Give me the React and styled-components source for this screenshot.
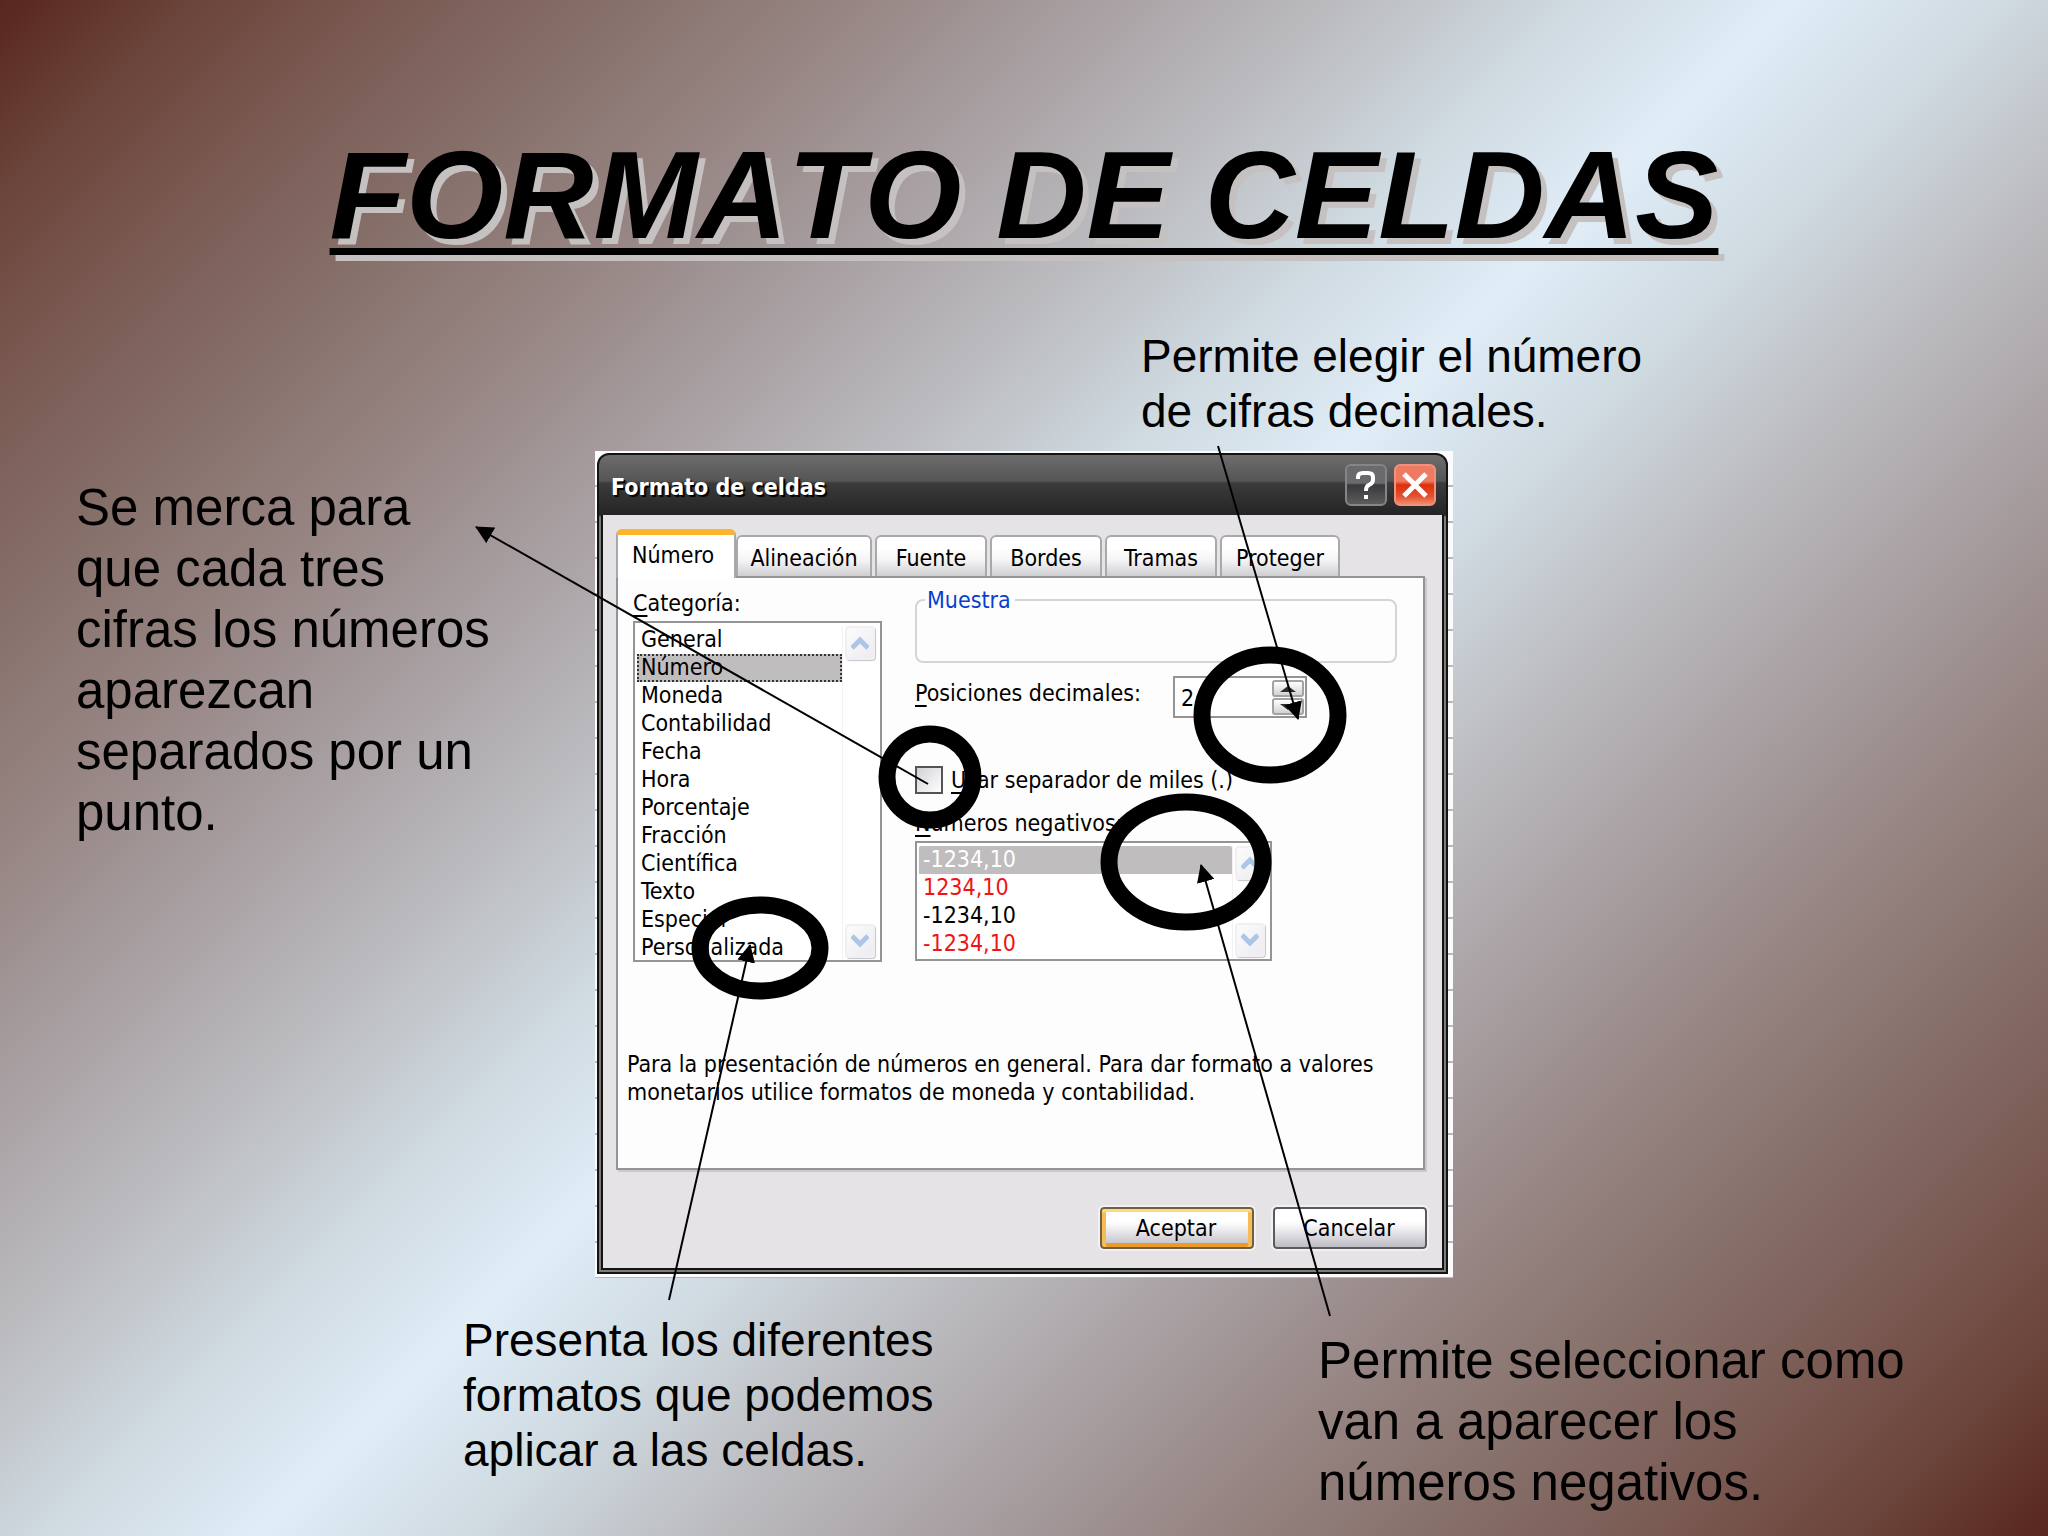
import React, { useState } from 'react';
import styled, { createGlobalStyle, css } from 'styled-components';

const constants = {
  slideFont: '"Liberation Sans", Arial, sans-serif',
  dialogFont: '"DejaVu Sans Condensed", Tahoma, Roboto, sans-serif',
  frame: '#141414',
  frameLight: '#7c7d7a',
  face: '#e5e3e6',
  line: '#949496',
  selection: '#c0bdbf',
  legend: '#0a40cc',
  negative: '#f01414',
};

const categories = [
  'General',
  'Número',
  'Moneda',
  'Contabilidad',
  'Fecha',
  'Hora',
  'Porcentaje',
  'Fracción',
  'Científica',
  'Texto',
  'Especial',
  'Personalizada',
];

const negatives = [
  { id: 'minus', text: '-1234,10' },
  { id: 'red', text: '1234,10', red: true },
  { id: 'minus-black', text: '-1234,10' },
  { id: 'minus-red', text: '-1234,10', red: true },
];

const tabs = [
  { name: 'Número', width: 120 },
  { name: 'Alineación', width: 136 },
  { name: 'Fuente', width: 112 },
  { name: 'Bordes', width: 112 },
  { name: 'Tramas', width: 112 },
  { name: 'Proteger', width: 120 },
];

const GlobalStyle = createGlobalStyle`
  * {
    box-sizing: border-box;
  }

  body {
    margin: 0;
    color: #000;
    font-family: ${constants.slideFont};
  }

  button, input, select {
    font: inherit;
    color: inherit;
    margin: 0;
  }
`;

const Slide = styled.main`
  min-height: 100vh;
  padding: 120px 0 20px;
  overflow: hidden;
  background: linear-gradient(
    135deg,
    #58261c 0%,
    #6a4238 5%,
    #7a5a53 11%,
    #866f69 17%,
    #978684 24%,
    #a9a1a4 31%,
    #bdbec2 38%,
    #cfdae1 44%,
    #e0edf7 50%,
    #cfdae1 56%,
    #bdbec2 62%,
    #a9a1a4 69%,
    #978684 76%,
    #866f69 83%,
    #7a5a53 89%,
    #6a4238 95%,
    #58261c 100%
  );
`;

const Title = styled.h1`
  margin: 0 0 59px;
  font-size: 125px;
  line-height: 150px;
  font-style: italic;
  text-align: center;
  text-decoration: underline 7px;
  text-underline-offset: 10px;
  text-decoration-skip-ink: none;
  text-shadow: 6px 6px 0 #c4c1c0;
  font-kerning: none;
`;

const Board = styled.div`
  display: grid;
  grid-template-columns: 1fr 858px 1fr;
`;

const Note = styled.p`
  margin: 0;
  font-size: ${({ $large }) => ($large ? 51 : 46)}px;
  line-height: ${({ $large }) => ($large ? 61 : 55)}px;
`;

const TopNote = styled(Note)`
  grid-column: 2;
  width: 530px;
  margin: 0 0 12px 546px;
`;

const SideNote = styled(Note)`
  grid-column: 1;
  width: 420px;
  margin: 26px 0 0 76px;
`;

const BottomNotes = styled.div`
  grid-column: 1 / -1;
  display: grid;
  grid-template-columns: 1fr 1fr;
  padding-top: 35px;
`;

const BottomLeftNote = styled(Note)`
  justify-self: end;
  width: 561px;
  padding-right: 60px;
`;

const BottomRightNote = styled(Note)`
  width: 610px;
  margin: 17px 0 0 294px;
`;

const Figure = styled.figure`
  position: relative;
  grid-column: 2;
  margin: 0;
  padding: 2px 5px 4px 2px;
  background: repeating-linear-gradient(#fbfbfb 0 34px, #b9b9bd 34px 36px);
`;

const Overlay = styled.svg`
  position: absolute;
  top: 0;
  left: 0;
  overflow: visible;
  pointer-events: none;
`;

const Window = styled.section`
  padding: 0 2px 2px;
  border: 2px solid ${constants.frame};
  border-radius: 12px 12px 0 0;
  background: linear-gradient(#6d6d6d 0, #555 26px, #3b3b3b 28px, #242424 60px, ${constants.frameLight} 62px);
  font-family: ${constants.dialogFont};
  font-size: 23px;
  line-height: 28px;
`;

const TitleBar = styled.header`
  display: flex;
  align-items: center;
  gap: 7px;
  height: 60px;
  padding: 0 8px 0 10px;
`;

const WindowTitle = styled.h2`
  flex: 1;
  margin: 0;
  padding-top: 3px;
  color: #fff;
  font-size: 23px;
  text-shadow: 2px 2px 1px #000;
`;

const CaptionButton = styled.button`
  display: flex;
  align-items: center;
  justify-content: center;
  width: 42px;
  height: 42px;
  padding: 0;
  border: 2px solid ${({ $close }) => ($close ? '#f0917c' : '#858587')};
  border-radius: 6px;
  background: ${({ $close }) => ($close
    ? 'linear-gradient(#ee7a62 0 40%, #dd2f0c 50%, #e2532f 80%, #f08a70)'
    : 'linear-gradient(#6a6a6c 0 45%, #39393b 50%, #5c5c5e)')};
`;

const Body = styled.div`
  padding: 14px 17px 19px 13px;
  border: 2px solid ${constants.frame};
  border-top: 0;
  background: ${constants.face};
`;

const TabList = styled.div`
  display: flex;
  align-items: flex-end;
  gap: 3px;
`;

const Tab = styled.button`
  width: ${({ $width }) => $width}px;
  height: 41px;
  padding: 2px 0 0;
  border: 2px solid #a9a9ac;
  border-bottom: 0;
  border-radius: 6px 6px 0 0;
  background: linear-gradient(#fff 30%, #f4f3f5 60%, #cfced1);

  ${({ $active }) => $active && css`
    position: relative;
    height: 49px;
    margin: 0 -3px -2px 0;
    padding: 0 6px 4px 0;
    border-top: 6px solid #fbb42c;
    background: #fff;
  `}
`;

const Panel = styled.div`
  height: 594px;
  border: 2px solid ${constants.line};
  box-shadow: 2px 2px 0 #cbc9cc;
  background: #fefdfe;
  padding: 8px 26px 0 15px;
`;

const Columns = styled.div`
  display: grid;
  grid-template-columns: 249px 1fr;
  column-gap: 33px;
`;

const Label = styled.label`
  display: block;

  &::first-letter {
    text-decoration: underline 2px;
    text-underline-offset: 4px;
  }
`;

const ListLabel = styled(Label)`
  padding: 3px 0 4px;
`;

const ListFrame = styled.div`
  display: flex;
  width: ${({ $width }) => $width}px;
  height: ${({ $height }) => $height}px;
  padding: 3px 3px 1px 2px;
  border: 2px solid ${constants.line};
  background: #fff;
`;

const List = styled.select`
  flex: 1;
  min-width: 0;
  height: 100%;
  padding: 0;
  border: 0;
  outline: 0;
  overflow: hidden;
  scrollbar-width: none;
  background: transparent;
`;

const Option = styled.option`
  height: 28px;
  min-height: 28px;
  padding: 0 4px;
  line-height: 28px;
  color: ${({ $red }) => ($red ? constants.negative : '#000')};

  &:checked {
    color: ${({ $inverse }) => ($inverse ? '#fff' : '#000')};
    background: linear-gradient(${constants.selection}, ${constants.selection});
    ${({ $inverse }) => !$inverse && css`
      outline: 2px dotted #333;
      outline-offset: -2px;
    `}
  }
`;

const ScrollBar = styled.div`
  display: flex;
  flex-direction: column;
  justify-content: space-between;
  width: 35px;
  padding: 0 0 1px 2px;
  border-left: 1px solid #f3f1f4;
`;

const ScrollButton = styled.button`
  display: flex;
  align-items: center;
  justify-content: center;
  width: 30px;
  height: 34px;
  padding: 0;
  border: 2px solid #f0f0f3;
  border-radius: 4px;
  box-shadow: 1px 1px 1px #c4c4cc;
  background: linear-gradient(135deg, #fcfcfd, #ececf1);
`;

const Sample = styled.fieldset`
  height: 77px;
  margin: 0 0 13px;
  padding: 0 8px;
  border: 2px solid #d5d4d8;
  border-radius: 8px;
  color: ${constants.legend};

  legend {
    padding: 0 4px 0 2px;
  }
`;

const DecimalsRow = styled.div`
  display: flex;
  align-items: flex-start;
  justify-content: space-between;
  width: 392px;
  height: 90px;

  label {
    margin-top: 3px;
  }
`;

const Spinner = styled.div`
  display: flex;
  width: 134px;
  height: 42px;
  padding: 2px 1px 1px 6px;
  border: 2px solid ${constants.line};
  background: #fff;

  input {
    flex: 1;
    min-width: 0;
    padding: 0;
    border: 0;
    outline: 0;
    background: transparent;
  }
`;

const SpinButtons = styled.div`
  display: flex;
  flex-direction: column;
  gap: 1px;

  button {
    display: flex;
    align-items: center;
    justify-content: center;
    width: 32px;
    height: 17px;
    padding: 0;
    border: 2px solid #a3a2a5;
    border-radius: 3px;
    background: linear-gradient(#fff, #d2d1d4);
  }
`;

const CheckRow = styled.div`
  display: flex;
  align-items: center;
  gap: 8px;
  margin-bottom: 12px;
`;

const Checkbox = styled.input`
  appearance: none;
  width: 28px;
  height: 28px;
  border: 2px solid #555457;
  background: linear-gradient(135deg, #d2d1d5, #fff);

  &:checked {
    background: #77767a;
  }
`;

const Hint = styled.p`
  width: 770px;
  margin: 88px 0 0 -6px;
`;

const Actions = styled.footer`
  display: flex;
  justify-content: flex-end;
  gap: 19px;
  margin: 37px -2px 0 0;
`;

const ActionButton = styled.button`
  width: 154px;
  height: 42px;
  padding: 0 2px 0 0;
  border: 2px solid #5b5a5f;
  border-radius: 4px;
  outline: 2px solid #f1f0f3;
  background: linear-gradient(#fff 35%, #e6e5e9 60%, #bebdc4);

  ${({ $primary }) => $primary && css`
    border-color: #6e5f45;
    box-shadow:
      inset 0 3px 0 #fbdc7c,
      inset 4px 0 0 #f6bd55,
      inset -4px 0 0 #f6bd55,
      inset 0 -4px 0 #ec9b2b;
  `}
`;

const Chevron = ({ down }) => (
  <svg width="18" height="14" viewBox="0 0 18 14" aria-hidden="true">
    <path
      d={down ? 'M1 2 9 10 17 2' : 'M1 12 9 4 17 12'}
      fill="none"
      stroke="#adc6e6"
      strokeWidth="5"
    />
  </svg>
);

const SpinArrow = ({ down }) => (
  <svg width="18" height="6" viewBox="0 0 18 6" aria-hidden="true">
    <path d={down ? 'M1 0H17L9 6Z' : 'M1 6H17L9 0Z'} fill="#2c2c2e" />
  </svg>
);

const ScrollArrows = () => (
  <ScrollBar>
    <ScrollButton type="button" aria-label="Subir">
      <Chevron />
    </ScrollButton>
    <ScrollButton type="button" aria-label="Bajar">
      <Chevron down />
    </ScrollButton>
  </ScrollBar>
);

// Rings and arrows share one coordinate system with its origin at the slide corner
const Callouts = () => (
  <Overlay width="858" height="828" viewBox="595 451 858 828" aria-hidden="true">
    <defs>
      <marker
        id="head"
        markerUnits="userSpaceOnUse"
        markerWidth="18"
        markerHeight="18"
        refX="17"
        refY="9"
        orient="auto"
      >
        <path d="M0 0 18 9 0 18Z" />
      </marker>
    </defs>
    <g fill="none" stroke="#000" strokeWidth="17">
      <ellipse cx="930" cy="777" rx="43" ry="43" />
      <ellipse cx="760" cy="948" rx="60" ry="43" />
      <ellipse cx="1270" cy="715" rx="68" ry="60" />
      <ellipse cx="1186" cy="862" rx="77" ry="60" />
    </g>
    <g stroke="#000" strokeWidth="2" markerEnd="url(#head)">
      <line x1="928" y1="784" x2="476" y2="527" />
      <line x1="1218" y1="446" x2="1298" y2="719" />
      <line x1="669" y1="1300" x2="750" y2="945" />
      <line x1="1330" y1="1316" x2="1201" y2="865" />
    </g>
  </Overlay>
);

const FormatDialog = () => {
  const [tab, setTab] = useState('Número');
  const [decimals, setDecimals] = useState(2);

  return (
    <Window role="dialog" aria-labelledby="dialog-title">
      <TitleBar>
        <WindowTitle id="dialog-title">Formato de celdas</WindowTitle>
        <CaptionButton type="button" aria-label="Ayuda">
          <svg width="24" height="30" viewBox="0 0 24 30" fill="none" stroke="#fff" strokeWidth="4">
            <path d="M4 9V7Q4 3 9 3H14Q19 3 19 7V10Q19 13 15 15Q12 16 12 21M12 25V29" />
          </svg>
        </CaptionButton>
        <CaptionButton type="button" aria-label="Cerrar" $close>
          <svg width="26" height="26" viewBox="0 0 26 26" stroke="#fff" strokeWidth="5">
            <path d="M2 2 24 24M24 2 2 24" />
          </svg>
        </CaptionButton>
      </TitleBar>
      <Body>
        <TabList role="tablist">
          {tabs.map(({ name, width }) => (
            <Tab
              key={name}
              type="button"
              role="tab"
              aria-selected={tab === name}
              $active={tab === name}
              $width={width}
              onClick={() => setTab(name)}
            >
              {name}
            </Tab>
          ))}
        </TabList>
        <Panel role="tabpanel">
          <Columns>
            <div>
              <ListLabel htmlFor="category">Categoría:</ListLabel>
              <ListFrame $width={249} $height={341}>
                <List id="category" size={12} defaultValue="Número">
                  {categories.map(name => (
                    <Option key={name} value={name}>{name}</Option>
                  ))}
                </List>
                <ScrollArrows />
              </ListFrame>
            </div>
            <div>
              <Sample>
                <legend>Muestra</legend>
              </Sample>
              <DecimalsRow>
                <Label htmlFor="decimals">Posiciones decimales:</Label>
                <Spinner>
                  <input
                    id="decimals"
                    inputMode="numeric"
                    value={decimals}
                    onChange={e => setDecimals(Number(e.target.value) || 0)}
                  />
                  <SpinButtons>
                    <button type="button" aria-label="Más" onClick={() => setDecimals(decimals + 1)}>
                      <SpinArrow />
                    </button>
                    <button type="button" aria-label="Menos" onClick={() => setDecimals(Math.max(0, decimals - 1))}>
                      <SpinArrow down />
                    </button>
                  </SpinButtons>
                </Spinner>
              </DecimalsRow>
              <CheckRow>
                <Checkbox id="thousands" type="checkbox" />
                <Label htmlFor="thousands">Usar separador de miles (.)</Label>
              </CheckRow>
              <ListLabel htmlFor="negatives">Números negativos:</ListLabel>
              <ListFrame $width={357} $height={120}>
                <List id="negatives" size={4} defaultValue="minus">
                  {negatives.map(({ id, text, red }) => (
                    <Option key={id} value={id} $red={red} $inverse>{text}</Option>
                  ))}
                </List>
                <ScrollArrows />
              </ListFrame>
            </div>
          </Columns>
          <Hint>
            Para la presentación de números en general. Para dar formato a valores
            monetarios utilice formatos de moneda y contabilidad.
          </Hint>
        </Panel>
        <Actions>
          <ActionButton type="button" $primary>Aceptar</ActionButton>
          <ActionButton type="button">Cancelar</ActionButton>
        </Actions>
      </Body>
    </Window>
  );
};

const App = () => (
  <>
    <GlobalStyle />
    <Slide>
      <Title>FORMATO DE CELDAS</Title>
      <Board>
        <TopNote>Permite elegir el número de cifras decimales.</TopNote>
        <SideNote $large>
          Se merca para que cada tres cifras los números aparezcan separados por un punto.
        </SideNote>
        <Figure>
          <FormatDialog />
          <Callouts />
        </Figure>
        <BottomNotes>
          <BottomLeftNote>Presenta los diferentes formatos que podemos aplicar a las celdas.</BottomLeftNote>
          <BottomRightNote $large>
            Permite seleccionar como van a aparecer los números negativos.
          </BottomRightNote>
        </BottomNotes>
      </Board>
    </Slide>
  </>
);

export default App;
